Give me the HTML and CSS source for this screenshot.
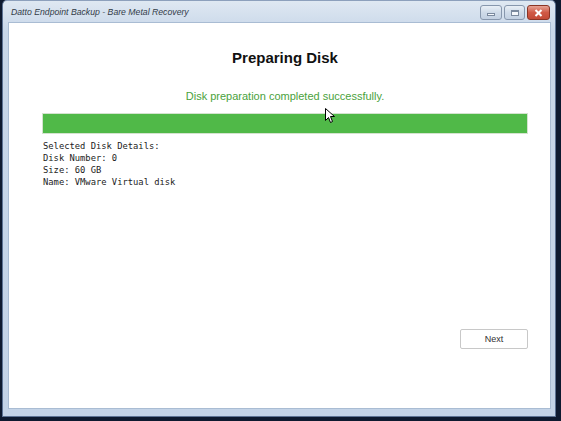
FILE: index.html
```html
<!DOCTYPE html>
<html>
	<head>
		<meta charset="utf-8">
		<title>Datto Endpoint Backup - Bare Metal Recovery</title>
		<link rel="stylesheet" href="styles.css">
	</head>
	<body>
		<div class="window">
			<div class="titlebar">
				<span class="title">Datto Endpoint Backup - Bare Metal Recovery</span>
				<div class="controls">
					<span class="btn min"><i></i></span>
					<span class="btn max"><i></i></span>
					<span class="btn close">
						<svg width="9" height="8" viewBox="0 0 9 8"><path d="M1.5 1 L7.5 7 M7.5 1 L1.5 7" stroke="#fff" stroke-width="2"/></svg>
					</span>
				</div>
			</div>
			<div class="client">
				<h1 class="heading">Preparing Disk</h1>
				<p class="status">Disk preparation completed successfully.</p>
				<div class="progress"><div class="fill"></div></div>
				<pre class="details">Selected Disk Details:
Disk Number: 0
Size: 60 GB
Name: VMware Virtual disk</pre>
				<div class="footer">
					<button class="next">Next</button>
				</div>
				<svg class="cursor" width="11" height="16" viewBox="0 0 11 16"><path d="M0.5 0.5 L0.5 12.5 L3.5 9.5 L5.5 14.5 L7.5 13.5 L5.5 8.5 L9.5 8.5 Z" fill="#fff" stroke="#000" stroke-width="1"/></svg>
			</div>
		</div>
	</body>
</html>
```

FILE: styles.css
```css
*{margin: 0; padding: 0; box-sizing: border-box;}
html, body{height: 100%;}
body{background: #0e1a30; padding-left: 2px; overflow: hidden; font-family: "Liberation Sans", Arial, sans-serif;}
.window{width: 554px; height: 417px; background: linear-gradient(#dfe8f2, #c8d7e9 30px, #c3d3e7); border: 1px solid #5d7394; border-top-color: #8da0bc; border-radius: 5px 5px 0 0; display: flex; flex-direction: column; padding: 0 4px 7px 5px;}
.titlebar{height: 21px; display: flex; align-items: center; justify-content: space-between;}
.title{font-style: italic; font-size: 8.7px; color: #333c48; padding-left: 3px; padding-top: 1px;}
.controls{display: flex; gap: 2px; align-self: flex-start; padding-top: 4px; padding-right: 1px;}
.btn{display: flex; align-items: center; justify-content: center; height: 15px; border: 1px solid #8797ad; border-radius: 3px; background: linear-gradient(#e9eff6, #cfdbe9 50%, #c2d0e2);}
.btn.min{width: 22px;}
.btn.max{width: 21px;}
.btn.close{width: 23px; background: linear-gradient(#e6a294, #d05a46 50%, #c34a36); border-color: #8a3424;}
.min i{display: block; width: 8px; height: 3px; margin-top: 3px; background: #f4f7fb; border: 1px solid #7a899e;}
.max i{display: block; width: 8px; height: 6px; background: #f4f7fb; border: 1px solid #7a899e; border-top-width: 2px;}
.client{flex: 1; background: #fff; border: 1px solid #a9bcd3; position: relative; display: flex; flex-direction: column; padding: 0 22px 0 33px;}
.heading{font-size: 15px; font-weight: bold; color: #111; text-align: center; margin-top: 24px; line-height: 22px;}
.status{font-size: 11px; color: #4aa23c; text-align: center; margin-top: 20px; line-height: 14px;}
.progress{height: 21px; margin-top: 10px; border: 1px solid #d4e3cf; background: #fff;}
.fill{height: 100%; background: #50b948;}
.details{font-family: "DejaVu Sans Mono", "Liberation Mono", monospace; font-size: 8.8px; line-height: 12px; color: #222; margin-top: 6px; padding-left: 1px;}
.footer{margin-top: auto; display: flex; justify-content: flex-end; padding-bottom: 59px;}
.next{width: 68px; height: 20px; background: #fff; border: 1px solid #c8c8c8; border-radius: 2px; font-family: "Liberation Sans", Arial, sans-serif; font-size: 9px; color: #333;}
.cursor{position: absolute; left: 316px; top: 85px;}
```
